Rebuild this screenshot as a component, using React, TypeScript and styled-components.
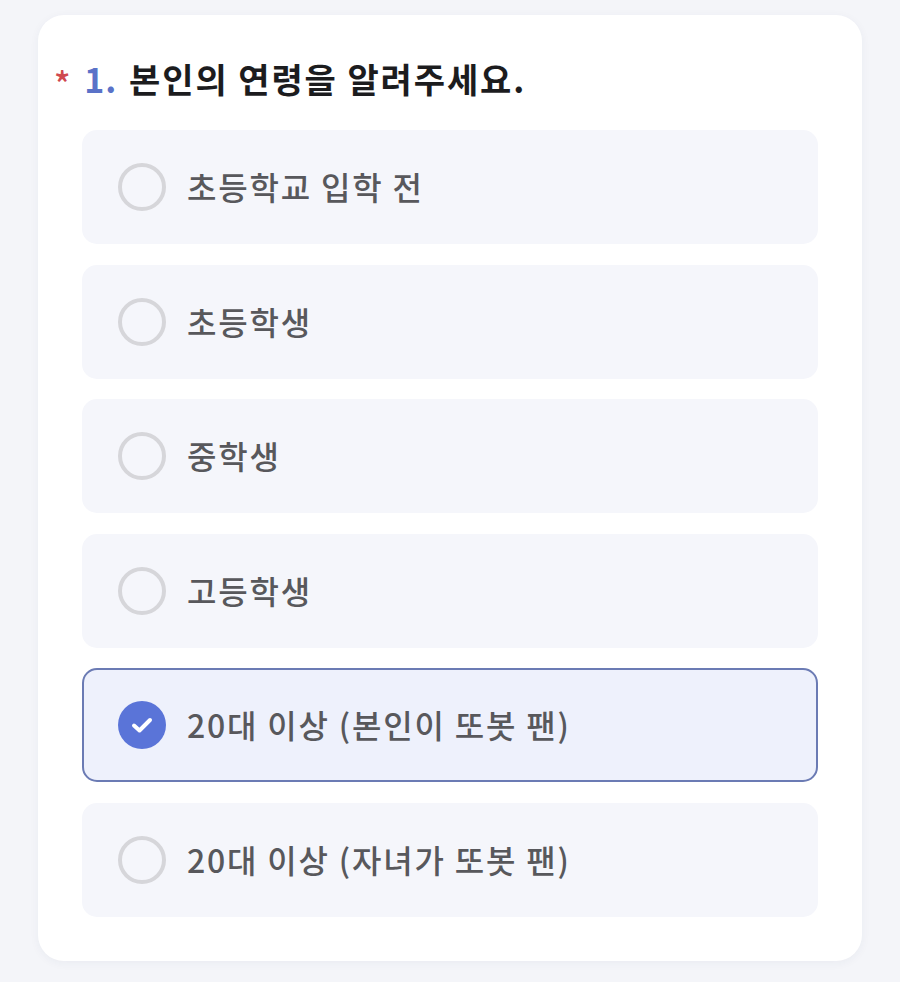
import React, { useState } from "react";
import styled, { createGlobalStyle } from "styled-components";

const Global = createGlobalStyle`
  html, body { margin: 0; padding: 0; background: #f4f5f9; }
  body { font-family: "Noto Sans CJK KR", "Noto Sans", sans-serif; }
`;

const Page = styled.div`
  padding: 15px 38px 21px 38px;
  background: #f4f5f9;
`;

const Card = styled.div`
  background: #ffffff;
  border-radius: 26px;
  box-shadow: 0 2px 10px rgba(40, 50, 90, 0.05);
  padding: 38px 44px 44px 16px;
`;

const Title = styled.h2`
  margin: 0;
  display: flex;
  align-items: baseline;
  font-size: 34px;
  font-weight: 700;
  letter-spacing: 1.9px;
  color: #1c1c1e;
  line-height: 52px;
`;

const Star = styled.span`
  color: #d0494f;
  font-size: 34px;
  font-weight: 500;
  margin-right: 12px;
  position: relative;
  top: 4px;
`;

const Num = styled.span`
  color: #5a72c8;
  letter-spacing: 0.8px;
  margin-right: 12px;
`;

const List = styled.div`
  display: flex;
  flex-direction: column;
  gap: 20.5px;
  margin: 25px 0 0 28px;
`;

const Option = styled.button<{ $selected: boolean }>`
  all: unset;
  box-sizing: border-box;
  height: 114px;
  display: flex;
  align-items: center;
  gap: 21px;
  padding: 0 34px;
  border-radius: 15px;
  background: ${(p) => (p.$selected ? "#eef1fc" : "#f5f6fb")};
  border: 2px solid ${(p) => (p.$selected ? "#6b7bb4" : "transparent")};
  cursor: pointer;
`;

const Radio = styled.span<{ $selected: boolean }>`
  box-sizing: border-box;
  width: 48px;
  height: 48px;
  flex: none;
  border-radius: 50%;
  display: flex;
  align-items: center;
  justify-content: center;
  background: ${(p) => (p.$selected ? "#5a74d8" : "transparent")};
  border: ${(p) => (p.$selected ? "none" : "4px solid #d6d6da")};
`;

const Label = styled.span`
  font-size: 32px;
  font-weight: 500;
  color: #58585c;
  letter-spacing: 1.8px;
  padding-bottom: 2px;
`;

const options = [
  "초등학교 입학 전",
  "초등학생",
  "중학생",
  "고등학생",
  "20대 이상 (본인이 또봇 팬)",
  "20대 이상 (자녀가 또봇 팬)",
];

export default function App() {
  const [sel, setSel] = useState(4);
  return (
    <>
      <Global />
      <Page>
        <Card>
          <Title>
            <Star>*</Star>
            <Num>1.</Num>
            본인의 연령을 알려주세요.
          </Title>
          <List>
            {options.map((o, i) => (
              <Option key={o} $selected={sel === i} onClick={() => setSel(i)}>
                <Radio $selected={sel === i}>
                  {sel === i && (
                    <svg width="26" height="20" viewBox="0 0 26 20">
                      <path
                        d="M5 10.5 L10.5 15.5 L21 5"
                        fill="none"
                        stroke="#ffffff"
                        strokeWidth="4"
                        strokeLinecap="round"
                        strokeLinejoin="round"
                      />
                    </svg>
                  )}
                </Radio>
                <Label>{o}</Label>
              </Option>
            ))}
          </List>
        </Card>
      </Page>
    </>
  );
}
